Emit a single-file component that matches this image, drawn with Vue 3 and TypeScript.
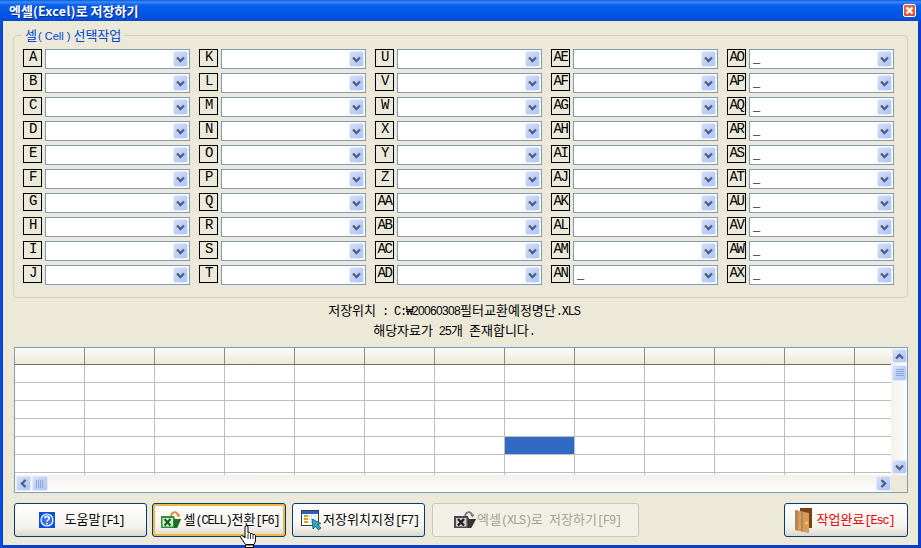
<script setup lang="ts">
const columns: string[][] = [
  ['A', 'B', 'C', 'D', 'E', 'F', 'G', 'H', 'I', 'J'],
  ['K', 'L', 'M', 'N', 'O', 'P', 'Q', 'R', 'S', 'T'],
  ['U', 'V', 'W', 'X', 'Y', 'Z', 'AA', 'AB', 'AC', 'AD'],
  ['AE', 'AF', 'AG', 'AH', 'AI', 'AJ', 'AK', 'AL', 'AM', 'AN'],
  ['AO', 'AP', 'AQ', 'AR', 'AS', 'AT', 'AU', 'AV', 'AW', 'AX'],
]
const cells = columns.map((col, c) =>
  col.map((name, r) => ({ name, value: c === 4 || (c === 3 && r === 9) ? '_' : '' })),
)
const rows = 7
const cols = 13
</script>

<template>
  <div class="window">
    <div class="titlebar">
      <span class="title">엑셀<span class="tlat">(Excel)</span>로 저장하기</span>
      <span class="close">
        <svg width="11" height="11" viewBox="0 0 11 11"><path d="M2.500 2.500l6 6M8.500 2.500l-6 6" stroke="#fff" stroke-width="2.400" fill="none" /></svg>
      </span>
    </div>
    <div class="body">
      <fieldset class="group">
        <legend>셀<span class="leg-lat">( Cell ) </span>선택작업</legend>
        <div class="combos">
          <div v-for="(col, c) in cells" :key="c" class="combo-col">
            <div v-for="cell in col" :key="cell.name" class="combo-row">
              <span class="tag">{{ cell.name }}</span>
              <span class="combo">
                <span class="val">{{ cell.value }}</span>
                <span class="sbtn drop">
                  <svg width="9" height="7" viewBox="0 0 9 7"><path d="M1 1.500l3.500 3.500L8 1.500" fill="none" stroke="#4d6185" stroke-width="2.400" /></svg>
                </span>
              </span>
            </div>
          </div>
        </div>
      </fieldset>

      <div class="info">
        <div>저장위치<span class="lat"> : C:₩</span><span class="num">20060308</span>필터교환예정명단<span class="lat">.XLS</span></div>
        <div>해당자료가<span class="lat">&nbsp;</span><span class="num">25</span>개<span class="lat">&nbsp;</span>존재합니다<span class="lat">.</span></div>
      </div>

      <div class="sheet">
        <div class="sheet-main">
          <div class="head">
            <div v-for="c in cols" :key="c" class="hcell"></div>
          </div>
          <div v-for="r in rows" :key="r" class="row">
            <div v-for="c in cols" :key="c" class="cell" :class="{ sel: r === 5 && c === 8 }"></div>
          </div>
        </div>
        <div class="vbar">
          <span class="sbtn arrow">
            <svg width="9" height="7" viewBox="0 0 9 7"><path d="M1 5.500L4.500 2 8 5.500" fill="none" stroke="#4d6185" stroke-width="2.400" /></svg>
          </span>
          <span class="sbtn vthumb">
            <svg width="8" height="8" viewBox="0 0 8 8"><path d="M0 .5h8M0 2.500h8M0 4.500h8M0 6.500h8" stroke="#8fa8d8" /></svg>
          </span>
          <span class="track"></span>
          <span class="sbtn arrow">
            <svg width="9" height="7" viewBox="0 0 9 7"><path d="M1 1.500l3.500 3.500L8 1.500" fill="none" stroke="#4d6185" stroke-width="2.400" /></svg>
          </span>
        </div>
        <div class="hbar">
          <span class="sbtn arrow">
            <svg width="7" height="9" viewBox="0 0 7 9"><path d="M5.500 1L2 4.500 5.500 8" fill="none" stroke="#4d6185" stroke-width="2.400" /></svg>
          </span>
          <span class="sbtn hthumb">
            <svg width="8" height="8" viewBox="0 0 8 8"><path d="M.5 0v8M2.500 0v8M4.500 0v8M6.500 0v8" stroke="#8fa8d8" /></svg>
          </span>
          <span class="track"></span>
          <span class="sbtn arrow">
            <svg width="7" height="9" viewBox="0 0 7 9"><path d="M1.500 1L5 4.500 1.500 8" fill="none" stroke="#4d6185" stroke-width="2.400" /></svg>
          </span>
        </div>
        <div class="corner"></div>
      </div>

      <div class="actions">
        <button class="btn help">
          <svg width="16" height="16" viewBox="0 0 16 16">
            <rect width="16" height="16" fill="#0a50e0" />
            <circle cx="8" cy="8" r="6" fill="#2f6ff0" stroke="#fff" stroke-width="1.200" />
            <path d="M5.800 6.200C6 3.800 10.200 3.800 10.200 6.200 10.200 7.800 8 7.800 8 9.600" fill="none" stroke="#fff" stroke-width="1.600" />
            <rect x="7.200" y="10.800" width="1.600" height="1.600" fill="#fff" />
          </svg>
          <span class="lbl">도움말<span class="lat">[F1]</span></span>
        </button>
        <button class="btn cellbtn">
          <svg width="20" height="21" viewBox="0 0 20 21">
            <path d="M10 6C11 1 16 1 17 5" fill="none" stroke="#e8843c" stroke-width="1.800" />
            <path d="M15 4.500h4.500l-2 3z" fill="#e8843c" />
            <path d="M0 6h13l1 3h6l-4 9H0z" fill="#2f8f30" />
            <path d="M13 9h7l-4 9h-3z" fill="#1f7028" />
            <rect x="1.500" y="8" width="10.500" height="8.500" fill="#d9f0d2" />
            <path d="M3.500 9l6 6.500M9.500 9l-6 6.500" stroke="#14641c" stroke-width="2.200" />
          </svg>
          <span class="lbl">셀<span class="lat">(CELL)</span>전환<span class="lat">[F6]</span></span>
        </button>
        <button class="btn locbtn">
          <svg width="22" height="22" viewBox="0 0 22 22">
            <rect x=".5" y="1.500" width="17" height="15" fill="#fff" stroke="#3a3a3a" />
            <rect x="1" y="2" width="16" height="3" fill="#2a5fd0" />
            <path d="M3 7h4M3 10h4M3 13h4" stroke="#d4a020" stroke-width="2" />
            <path d="M8 7h7M8 10h7M8 13h7" stroke="#b0b0b0" stroke-dasharray="1 1" />
            <path d="M11 10l1 10 2.500-2.500 3 3.500 2.500-2-3-3.500 3-1z" fill="#2aa8c8" stroke="#20506a" stroke-width=".8" />
          </svg>
          <span class="lbl">저장위치지정<span class="lat">[F7]</span></span>
        </button>
        <button class="btn disabled">
          <svg width="22" height="21" viewBox="0 0 22 21">
            <path d="M11 6C12 1 17 1 18 5" fill="none" stroke="#777" stroke-width="1.800" />
            <path d="M16 4.500h4.500l-2 3z" fill="#777" />
            <path d="M0 6h14l1 3h7l-5 9H0z" fill="#4a4a4a" />
            <path d="M14 9h8l-5 9h-3z" fill="#333" />
            <rect x="2" y="8" width="10.500" height="8.500" fill="#d0d0d0" />
            <path d="M4 9l6 6.500M10 9l-6 6.500" stroke="#222" stroke-width="2.400" />
          </svg>
          <span class="lbl">엑셀<span class="lat">(XLS)</span>로<span class="lat">&nbsp;</span>저장하기<span class="lat">[F9]</span></span>
        </button>
        <span class="spacer"></span>
        <button class="btn exit">
          <svg width="17" height="25" viewBox="0 0 17 25">
            <path d="M5 0h12v20H5z" fill="#7a4210" />
            <path d="M0 2l14 3v20L0 22z" fill="#d49a60" />
            <path d="M0 2l3 .6v20l-3-.6zM6 3.300l2 .4v20l-2-.4z" fill="#b98550" />
            <path d="M10 15h3M11.500 13.500v3" stroke="#f5e020" stroke-width="1" />
          </svg>
          <span class="lbl red">작업완료<span class="lat">[Esc]</span></span>
        </button>
      </div>
    </div>

    <svg class="hand" width="17" height="23" viewBox="0 0 17 23">
      <path d="M5 20h9v3H5z" fill="#000" />
      <path d="M5 1.500Q6.500 0 8 1.500V8Q9.500 7 10.500 8.500Q12 8 13 9.500Q14.500 9 15.500 10.500V15Q15.500 17 14 19.500H5.500L1 13Q0 11 1.500 10.500Q3 10.500 5 13Z" fill="#fff" stroke="#000" />
      <path d="M8 9v5M10.500 9v5M13 10v4" stroke="#000" stroke-width=".8" />
      <path d="M6 20.500h7v1.500H6z" fill="#fff" />
    </svg>
  </div>
</template>

<style>
html, body { margin: 0; padding: 0; background: #0a3fc8; }
</style>

<style scoped>
.window {
  position: relative;
  width: 921px;
  height: 548px;
  display: flex;
  flex-direction: column;
  box-sizing: border-box;
  overflow: hidden;
  font-family: "Noto Sans CJK KR", "Liberation Sans", sans-serif;
  font-size: 13px;
  color: #000;
  background: linear-gradient(90deg, #0a50e8 0, #0a3ecc 3px, #0a3ecc 100%);
}
.lat {
  font-family: "Liberation Mono", monospace;
  font-size: 12px;
  letter-spacing: -1.200px;
}
.num {
  font-family: "Liberation Sans", sans-serif;
  font-size: 12px;
  letter-spacing: -0.670px;
}
.titlebar {
  height: 21px;
  flex: none;
  display: flex;
  align-items: center;
  justify-content: space-between;
  padding: 0 5px 0 9px;
  background: linear-gradient(180deg, #0a5ae0 0, #3a8cf8 2px, #0a60ec 5px, #0358e8 12px, #0450dc 19px, #0346c4 21px);
}
.title {
  color: #fff;
  font-weight: 700;
  font-size: 13px;
  line-height: 16px;
  text-shadow: 1px 1px 0 #0a2a90;
}
.tlat {
  font-size: 12.500px;
  letter-spacing: 0.3px;
}
.close {
  box-sizing: border-box;
  width: 13px;
  height: 13px;
  display: flex;
  border: 1px solid #fff;
  border-radius: 2px;
  background: radial-gradient(circle at 40% 40%, #ee7a5e, #dc431e);
}
.body {
  flex: 1;
  margin: 0 3px 3px 3px;
  background: #ece9d8;
  padding: 7px 10px 0 10px;
  display: flex;
  flex-direction: column;
  min-height: 0;
}
.group {
  margin: 0;
  padding: 0 0 0 9px;
  height: 270px;
  box-sizing: border-box;
  border: 1px solid #d0d0bf;
  border-radius: 4px;
  flex: none;
}
.group legend {
  color: #0046d5;
  margin-left: -1px;
  padding: 0 3px;
  line-height: 14px;
  font-size: 13px;
}
.leg-lat {
  font-family: "Liberation Sans", sans-serif;
  font-size: 11px;
  padding-left: 1px;
}
.combos {
  display: grid;
  grid-template-columns: repeat(5, 167px);
  column-gap: 9px;
  padding-top: 6px;
}
.combo-col {
  display: flex;
  flex-direction: column;
  gap: 4px;
}
.combo-row {
  display: flex;
  align-items: flex-start;
  height: 20px;
  gap: 3px;
}
.tag {
  box-sizing: border-box;
  width: 19px;
  height: 18px;
  border: 1px solid #000;
  display: flex;
  align-items: center;
  justify-content: center;
  font-family: "Liberation Mono", monospace;
  font-size: 14px;
  line-height: 15px;
  letter-spacing: -1.400px;
  padding-bottom: 1px;
  flex: none;
}
.combo {
  box-sizing: border-box;
  width: 145px;
  height: 20px;
  border: 1px solid #7f9db9;
  background: #fff;
  display: flex;
  align-items: center;
  justify-content: space-between;
  padding: 1px;
}
.val {
  padding-left: 2px;
  line-height: 16px;
  font-size: 12px;
  font-family: "Liberation Mono", monospace;
}
.sbtn {
  box-sizing: border-box;
  display: flex;
  align-items: center;
  justify-content: center;
  flex: none;
  background: linear-gradient(135deg, #d5e1fb, #bed0f8 50%, #b2c6f6);
  border: 1px solid #e3ebfb;
  border-radius: 2px;
}
.drop {
  width: 15px;
  height: 16px;
}
.info {
  height: 49px;
  flex: none;
  display: flex;
  flex-direction: column;
  align-items: center;
  padding: 2px 13px 0 0;
  box-sizing: border-box;
  line-height: 20px;
}
.info > div { height: 20px; }
.sheet {
  box-sizing: border-box;
  width: 894px;
  margin-left: 1px;
  height: 146px;
  flex: none;
  border: 1px solid #7f9db9;
  background: #fff;
  display: grid;
  grid-template-columns: 1fr 16px;
  grid-template-rows: 1fr 17px;
  overflow: hidden;
}
.sheet-main {
  overflow: hidden;
  min-width: 0;
  min-height: 0;
}
.head {
  display: flex;
  height: 17px;
  box-sizing: border-box;
  border-bottom: 1px solid #716f64;
  width: 910px;
}
.hcell {
  flex: none;
  box-sizing: border-box;
  width: 70px;
  height: 16px;
  border-right: 1px solid #8d8c82;
  background: linear-gradient(180deg, #fdfcf9, #ece9d8);
}
.row {
  display: flex;
  height: 18px;
  width: 910px;
}
.cell {
  flex: none;
  box-sizing: border-box;
  width: 70px;
  height: 18px;
  border-right: 1px solid #bdbdbd;
  border-bottom: 1px solid #bdbdbd;
}
.cell.sel {
  background: #316ac5;
}
.vbar {
  grid-row: 1;
  grid-column: 2;
  display: flex;
  flex-direction: column;
  background: linear-gradient(90deg, #f3f1ec, #fefefe);
}
.hbar {
  grid-row: 2;
  grid-column: 1;
  display: flex;
  align-items: stretch;
  background: linear-gradient(180deg, #f3f1ec, #fefefe);
}
.track {
  flex: 1;
}
.vbar .sbtn { margin: 1px 0 1px 1px; }
.hbar .sbtn { margin: 1px 0 1px 1px; }
.vbar .arrow { height: 14px; }
.hbar .arrow { width: 15px; }
.vthumb { height: 16px; }
.hthumb { width: 16px; }
.corner {
  grid-row: 2;
  grid-column: 2;
  background: #ece9d8;
}
.actions {
  display: flex;
  gap: 5px;
  margin-top: 10px;
  margin-left: 1px;
  width: 894px;
}
.spacer { flex: 1; }
.btn {
  box-sizing: border-box;
  height: 34px;
  border: 1px solid #003c74;
  border-radius: 3px;
  background: linear-gradient(180deg, #ffffff 0, #f4f3ee 70%, #dcd8ca 100%);
  display: flex;
  align-items: center;
  justify-content: center;
  padding: 0;
  font: inherit;
  color: #000;
}
.lbl { line-height: 16px; white-space: nowrap; }
.help { width: 133px; gap: 10px; padding-left: 2px; }
.cellbtn {
  width: 134px;
  gap: 3px;
  padding-left: 2px;
  box-shadow: inset 0 0 0 2px #f5b53f;
}
.locbtn { width: 133px; gap: 0; margin-left: 1px; padding-left: 3px; }
.disabled {
  width: 207px;
  margin-left: 2px;
  border-color: #cbc7b8;
  background: #f2f0e6;
  color: #a5a295;
  gap: 1px;
  padding-left: 4px;
}
.exit { width: 124px; gap: 5px; padding-right: 3px; }
.red { color: #f00000; }
.hand {
  position: absolute;
  left: 240px;
  top: 525px;
}
</style>
